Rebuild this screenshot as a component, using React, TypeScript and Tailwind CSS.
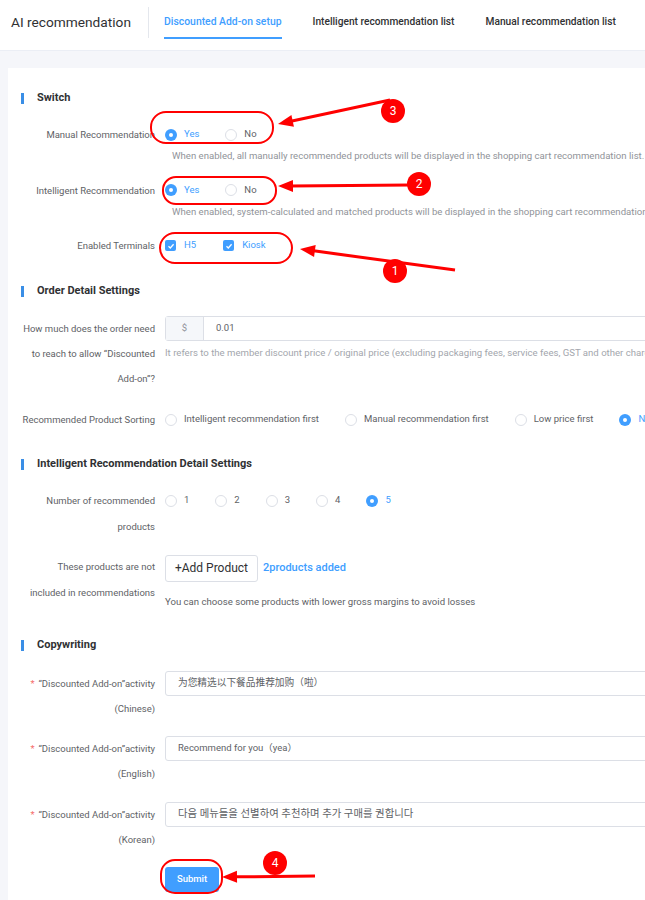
const label = "w-[147px] shrink-0 text-right text-[9.5px] leading-[25px] text-[#606266] whitespace-nowrap";

const Radio = ({ text, checked = false }: { text: string; checked?: boolean }) => (
  <div className="flex items-center mr-[26px] shrink-0">
    {checked ? (
      <span className="w-3 h-3 rounded-full bg-[#409eff] flex items-center justify-center">
        <span className="w-1 h-1 rounded-full bg-white" />
      </span>
    ) : (
      <span className="w-3 h-3 rounded-full border border-[#dcdfe6] bg-white" />
    )}
    <span className={"ml-[7px] text-[9.5px] whitespace-nowrap " + (checked ? "text-[#409eff]" : "text-[#606266]")}>{text}</span>
  </div>
);

const Check = ({ text }: { text: string }) => (
  <div className="flex items-center mr-[27px]">
    <span className="w-[11px] h-[11px] rounded-[2px] bg-[#409eff] flex items-center justify-center">
      <svg width="8" height="8" viewBox="0 0 8 8">
        <path d="M1.5 4.2 L3.3 6 L6.6 2.2" stroke="white" strokeWidth="1.3" fill="none" />
      </svg>
    </span>
    <span className="ml-[8px] text-[9.5px] text-[#409eff]">{text}</span>
  </div>
);

const SectionTitle = ({ title, className }: { title: string; className: string }) => (
  <div className={"flex items-center h-5 " + className}>
    <span className="ml-[13px] w-[3px] h-[11px] bg-[#3a8ee6]" />
    <span className="ml-[13px] text-[11px] font-bold text-[#303133]">{title}</span>
  </div>
);

const Help = ({ children, className = "" }: { children: React.ReactNode; className?: string }) => (
  <div className={"text-[9.6px] whitespace-nowrap " + className}>{children}</div>
);

const Star = () => <span className="text-[#f56c6c] mr-1">*</span>;

function arrowHead(x1: number, y1: number, x2: number, y2: number) {
  const a = Math.atan2(y2 - y1, x2 - x1);
  const len = 15;
  const w = 6;
  const bx = x2 - len * Math.cos(a);
  const by = y2 - len * Math.sin(a);
  const px = -Math.sin(a) * w;
  const py = Math.cos(a) * w;
  return `${x2},${y2} ${bx + px},${by + py} ${bx - px},${by - py}`;
}

const Arrow = ({ x1, y1, x2, y2 }: { x1: number; y1: number; x2: number; y2: number }) => {
  const a = Math.atan2(y2 - y1, x2 - x1);
  const ex = x2 - 12 * Math.cos(a);
  const ey = y2 - 12 * Math.sin(a);
  return (
    <g>
      <line x1={x1} y1={y1} x2={ex} y2={ey} stroke="#f00" strokeWidth="3" />
      <polygon points={arrowHead(x1, y1, x2, y2)} fill="#f00" />
    </g>
  );
};

const Badge = ({ x, y, n }: { x: number; y: number; n: string }) => (
  <g>
    <circle cx={x} cy={y} r="12" fill="#f00" />
    <text x={x} y={y + 4} textAnchor="middle" fontSize="12" fill="white" fontFamily="Roboto, Arial, sans-serif">{n}</text>
  </g>
);

const Annotations = () => (
  <svg className="absolute left-0 top-0 pointer-events-none" width="645" height="900">
    <rect x="151" y="112" width="122" height="31" rx="15" fill="none" stroke="#f00" strokeWidth="2" />
    <rect x="163" y="177" width="113" height="27" rx="13" fill="none" stroke="#f00" strokeWidth="2" />
    <rect x="160" y="233" width="132" height="30" rx="15" fill="none" stroke="#f00" strokeWidth="2" />
    <rect x="161" y="860" width="61" height="33" rx="14" fill="none" stroke="#f00" strokeWidth="2" />
    <Arrow x1={390} y1={100} x2={278} y2={124} />
    <Arrow x1={410} y1={185} x2={278} y2={186} />
    <Arrow x1={455} y1={270} x2={300} y2={249} />
    <Arrow x1={315} y1={876} x2={222} y2={877} />
    <Badge x={393} y={111} n="3" />
    <Badge x={419} y={184} n="2" />
    <Badge x={395} y={271} n="1" />
    <Badge x={275} y={863} n="4" />
  </svg>
);

const App = () => {
  return (
    <div className="relative w-[645px] h-[900px] overflow-hidden bg-[#f5f6fa] font-[Roboto,Arial,sans-serif]">
      {/* header */}
      <div className="h-[51px] bg-white border-b border-[#ebeef5] flex items-start">
        <div className="ml-[11px] mt-[14px] w-[119px] text-[13.7px] leading-4 text-[#303133] whitespace-nowrap">AI recommendation</div>
        <div className="ml-[18px] mt-[7px] w-px h-[31px] bg-[#e4e7ed]" />
        <div className="ml-[15px] mt-[14px] flex gap-[31px]">
          <div className="flex flex-col">
            <span className="text-[10.4px] leading-4 font-medium text-[#409eff]">Discounted Add-on setup</span>
            <span className="mt-[7px] h-[2px] bg-[#409eff]" />
          </div>
          <span className="text-[10.2px] leading-4 font-medium text-[#303133]">Intelligent recommendation list</span>
          <span className="text-[10.2px] leading-4 font-medium text-[#303133]">Manual recommendation list</span>
        </div>
      </div>

      {/* card */}
      <div className="mt-[17px] ml-[8px] w-[700px] h-[900px] bg-white pt-[20px]">
        <SectionTitle title="Switch" className="" />

        <div className="flex mt-[14px]">
          <div className={label}>Manual Recommendation</div>
          <div className="ml-[10px]">
            <div className="h-[25px] flex items-center">
              <Radio text="Yes" checked />
              <Radio text="No" />
            </div>
            <Help className="pl-[7px] leading-[18px] text-[#909399]">When enabled, all manually recommended products will be displayed in the shopping cart recommendation list.</Help>
          </div>
        </div>

        <div className="flex mt-[12.5px]">
          <div className={label}>Intelligent Recommendation</div>
          <div className="ml-[10px]">
            <div className="h-[25px] flex items-center">
              <Radio text="Yes" checked />
              <Radio text="No" />
            </div>
            <Help className="pl-[7px] leading-[18px] text-[#909399]">When enabled, system-calculated and matched products will be displayed in the shopping cart recommendation list.</Help>
          </div>
        </div>

        <div className="flex mt-[12.5px]">
          <div className={label}>Enabled Terminals</div>
          <div className="ml-[10px] h-[25px] flex items-center">
            <Check text="H5" />
            <Check text="Kiosk" />
          </div>
        </div>

        <SectionTitle title="Order Detail Settings" className="mt-[23.5px]" />

        <div className="flex mt-[14.5px]">
          <div className={label}>
            How much does the order need<br />to reach to allow “Discounted<br />Add-on”?
          </div>
          <div className="ml-[10px]">
            <div className="w-[520px] h-[25px] flex border border-[#dcdfe6] rounded-[3px] text-[9.5px]">
              <div className="w-[38px] bg-[#f5f7fa] border-r border-[#dcdfe6] flex items-center justify-center text-[#909399]">$</div>
              <div className="pl-[12px] flex items-center text-[#606266]">0.01</div>
            </div>
            <Help className="leading-[24px] text-[#a3a6ad]">It refers to the member discount price / original price (excluding packaging fees, service fees, GST and other charges)</Help>
          </div>
        </div>

        <div className="flex mt-[16px]">
          <div className={label}>Recommended Product Sorting</div>
          <div className="ml-[10px] h-[25px] flex items-center">
            <Radio text="Intelligent recommendation first" />
            <Radio text="Manual recommendation first" />
            <Radio text="Low price first" />
            <Radio text="Newest first" checked />
          </div>
        </div>

        <SectionTitle title="Intelligent Recommendation Detail Settings" className="mt-[22.5px]" />

        <div className="flex mt-[13px]">
          <div className={label + " leading-[26px]"}>
            Number of recommended<br />products
          </div>
          <div className="ml-[10px] h-[26px] flex items-center">
            <Radio text="1" />
            <Radio text="2" />
            <Radio text="3" />
            <Radio text="4" />
            <Radio text="5" checked />
          </div>
        </div>

        <div className="flex mt-[14px]">
          <div className={label + " leading-[26px]"}>
            These products are not<br />included in recommendations
          </div>
          <div className="ml-[10px]">
            <div className="mt-px flex items-center">
              <button className="w-[93px] h-[27px] border border-[#dcdfe6] rounded-[3px] bg-white text-[12px] text-[#303133]">+Add Product</button>
              <span className="ml-[5px] text-[11px] font-medium text-[#409eff]">2products added</span>
            </div>
            <Help className="mt-[10px] leading-[20px] text-[#606266]">You can choose some products with lower gross margins to avoid losses</Help>
          </div>
        </div>

        <SectionTitle title="Copywriting" className="mt-[23.5px]" />

        <div className="flex mt-[15.5px]">
          <div className={label}>
            <Star />“Discounted Add-on”activity<br />(Chinese)
          </div>
          <div className="ml-[10px] w-[520px] h-[25px] border border-[#dcdfe6] rounded-[3px] pl-[12px] flex items-center text-[9.7px] text-[#606266] font-[Roboto,'Noto_Sans_CJK_SC',sans-serif]">
            为您精选以下餐品推荐加购（啦）
          </div>
        </div>

        <div className="flex mt-[15px]">
          <div className={label}>
            <Star />“Discounted Add-on”activity<br />(English)
          </div>
          <div className="ml-[10px] w-[520px] h-[25px] border border-[#dcdfe6] rounded-[3px] pl-[12px] flex items-center text-[9.5px] text-[#606266] font-[Roboto,'Noto_Sans_CJK_SC',sans-serif]">
            Recommend for you（yea）
          </div>
        </div>

        <div className="flex mt-[16px]">
          <div className={label}>
            <Star />“Discounted Add-on”activity<br />(Korean)
          </div>
          <div className="ml-[10px] w-[520px] h-[25px] border border-[#dcdfe6] rounded-[3px] pl-[12px] flex items-center text-[10.4px] text-[#606266] font-[Roboto,'Noto_Sans_CJK_KR',sans-serif]">
            다음 메뉴들을 선별하여 추천하며 추가 구매를 권합니다
          </div>
        </div>

        <button className="ml-[157px] mt-[15.5px] w-[54px] h-[25px] rounded-[3px] bg-[#409eff] text-white text-[9.5px] font-medium">Submit</button>
      </div>

      <Annotations />
    </div>
  );
};

export default App;
